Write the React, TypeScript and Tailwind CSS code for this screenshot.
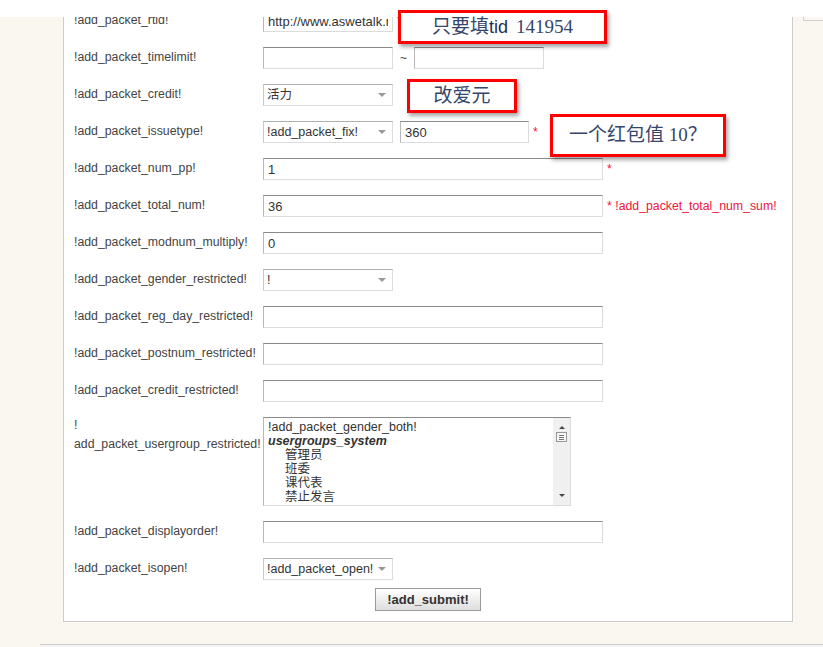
import React from 'react';

const inputCls =
  'block h-[22px] border border-t-[#8a8a8a] border-l-[#b8b8b8] border-r-[#dcdcdc] border-b-[#dcdcdc] bg-white px-[4px] text-[13px] text-[#333] outline-none';

function TextInput({ value = '', width = 'w-[340px]' }: { value?: string; width?: string }) {
  return <input readOnly value={value} className={`${inputCls} ${width}`} />;
}

function Select({ value, width = 'w-[130px]' }: { value: string; width?: string }) {
  return (
    <div
      className={`${width} h-[22px] border border-t-[#b0b0b0] border-l-[#c8c8c8] border-r-[#dcdcdc] border-b-[#dcdcdc] bg-white flex items-center justify-between pl-[3px] pr-[6px] text-[12.5px] text-[#333]`}
    >
      <span className="whitespace-nowrap">{value}</span>
      <span className="w-0 h-0 border-l-[4px] border-r-[4px] border-t-[4px] border-l-transparent border-r-transparent border-t-[#999]" />
    </div>
  );
}

function Row({ label, children }: { label: React.ReactNode; children: React.ReactNode }) {
  return (
    <div className="flex items-start">
      <div className="w-[189px] shrink-0 whitespace-nowrap leading-[19px] pt-[1px] text-[12.3px] text-[#444]">
        {label}
      </div>
      <div className="flex items-center">{children}</div>
    </div>
  );
}

function Req({ text = '' }: { text?: string }) {
  return <span className="ml-[4px] text-[12.3px] text-[#f0143c] whitespace-nowrap">*{text}</span>;
}

const callout =
  "absolute bg-white border-[3px] border-[#ff0000] shadow-[2px_3px_4px_rgba(0,0,0,0.35)] flex items-center justify-center text-[19px] text-[#34466b] font-['Liberation_Serif','Noto_Sans_CJK_SC',serif]";

export default function App() {
  return (
    <div className="relative w-[823px] h-[647px] overflow-hidden bg-white font-['Liberation_Sans','Noto_Sans_CJK_SC',sans-serif]">
      {/* white strip on top */}
      <div className="h-[17px] bg-white" />

      <div className="h-[630px] bg-[#faf7f0] overflow-hidden relative">
        {/* right column tab corner */}
        <div className="absolute left-[803px] top-0 h-[3px] border-l border-[#cfcfcf]" />
        <div className="absolute left-[803px] right-0 top-[3px] border-t border-[#cfcfcf]" />

        <div className="ml-[63px] w-[730px] h-[605px] bg-white border-l border-r border-b border-[#cccccc] overflow-hidden">
          <div className="mt-[-7px] px-[10px] flex flex-col gap-[15px]">
            <Row label="!add_packet_rtid!">
              <TextInput value="http://www.aswetalk.net/thread-141954-1-1.html" width="w-[130px]" />
              <Req />
            </Row>
            <Row label="!add_packet_timelimit!">
              <TextInput width="w-[130px]" />
              <span className="mx-[7px] text-[12px] text-[#444]">~</span>
              <TextInput width="w-[130px]" />
            </Row>
            <Row label="!add_packet_credit!">
              <Select value="活力" />
            </Row>
            <Row label="!add_packet_issuetype!">
              <Select value="!add_packet_fix!" />
              <div className="ml-[7px] flex">
                <TextInput value="360" width="w-[129px]" />
              </div>
              <Req />
            </Row>
            <Row label="!add_packet_num_pp!">
              <TextInput value="1" />
              <Req />
            </Row>
            <Row label="!add_packet_total_num!">
              <TextInput value="36" />
              <Req text=" !add_packet_total_num_sum!" />
            </Row>
            <Row label="!add_packet_modnum_multiply!">
              <TextInput value="0" />
            </Row>
            <Row label="!add_packet_gender_restricted!">
              <Select value="!" />
            </Row>
            <Row label="!add_packet_reg_day_restricted!">
              <TextInput />
            </Row>
            <Row label="!add_packet_postnum_restricted!">
              <TextInput />
            </Row>
            <Row label="!add_packet_credit_restricted!">
              <TextInput />
            </Row>
            <div className="flex items-start">
              <div className="w-[189px] shrink-0 whitespace-nowrap leading-[19px] mt-[-1px] text-[12.3px] text-[#444]">
                !<br />
                add_packet_usergroup_restricted!
              </div>
              <div className="w-[308px] h-[89px] border border-t-[#8a8a8a] border-l-[#b8b8b8] border-r-[#dcdcdc] border-b-[#dcdcdc] bg-white flex overflow-hidden">
                <div className="flex-1 pl-[4px] pt-[2px] text-[12.5px] leading-[14px] text-[#333]">
                  <div>!add_packet_gender_both!</div>
                  <div className="font-bold italic">usergroups_system</div>
                  <div className="pl-[17px]">管理员</div>
                  <div className="pl-[17px]">班委</div>
                  <div className="pl-[17px]">课代表</div>
                  <div className="pl-[17px]">禁止发言</div>
                </div>
                <div className="w-[17px] bg-[#f0f0f0] flex flex-col items-center justify-between py-[8px]">
                  <div className="flex flex-col items-center gap-[3px]">
                    <span className="w-0 h-0 border-l-[3px] border-r-[3px] border-b-[3px] border-l-transparent border-r-transparent border-b-[#444]" />
                    <div className="w-[11px] h-[10px] border border-[#999] bg-[#f6f6f6] flex flex-col items-center justify-center gap-[1px]">
                      <span className="w-[5px] border-t border-[#777]" />
                      <span className="w-[5px] border-t border-[#777]" />
                      <span className="w-[5px] border-t border-[#777]" />
                    </div>
                  </div>
                  <span className="w-0 h-0 border-l-[3px] border-r-[3px] border-t-[3px] border-l-transparent border-r-transparent border-t-[#444]" />
                </div>
              </div>
            </div>
            <Row label="!add_packet_displayorder!">
              <TextInput />
            </Row>
            <Row label="!add_packet_isopen!">
              <Select value="!add_packet_open!" />
            </Row>
            <div className="flex justify-center mt-[-7px]">
              <button className="w-[106px] h-[23px] border border-[#9a9a9a] bg-gradient-to-b from-white to-[#dedede] text-[13px] font-bold text-[#333]">
                !add_submit!
              </button>
            </div>
          </div>
        </div>

        <div className="mt-[22px] ml-[40px] h-[4px] border-t border-[#cccccc] bg-[#f3f3f3]" />
      </div>

      {/* callouts */}
      <div className={`${callout} left-[398px] top-[10px] w-[209px] h-[34px]`}>
        <span>只要填</span>
        <span className="font-['Liberation_Sans',sans-serif] text-[18px] text-[#1f2f4f]">tid</span>
        <span className="ml-[8px]">141954</span>
      </div>
      <div className={`${callout} left-[407px] top-[79px] w-[110px] h-[34px]`}>改爱元</div>
      <div className={`${callout} left-[550px] top-[114px] w-[176px] h-[43px]`}>一个红包值 10？</div>
    </div>
  );
}
